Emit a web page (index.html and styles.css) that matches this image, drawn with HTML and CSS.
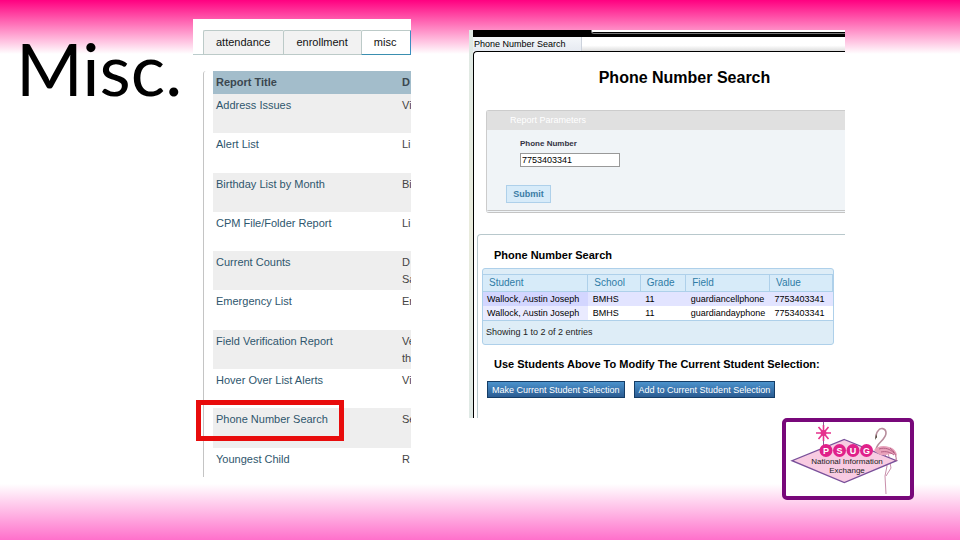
FILE: index.html
```html
<!DOCTYPE html>
<html lang="en">
<head>
    <meta charset="UTF-8">
    <meta name="viewport" content="width=device-width, initial-scale=1.0">
    <title>Misc.</title>
    <link rel="stylesheet" href="styles.css">
</head>
<body>

    <main class="slide">
        <h1 class="slide-title">Misc.</h1>

        <section class="reports">
            <nav class="tabs">
                <a class="tab" href="#attendance">attendance</a>
                <a class="tab" href="#enrollment">enrollment</a>
                <a class="tab active" href="#misc">misc</a>
            </nav>

            <div class="report-list">
                <table class="report-table">
                    <thead>
                        <tr><th class="name">Report Title</th><th>D</th></tr>
                    </thead>
                    <tbody>
                        <tr><td><a href="#">Address Issues</a></td><td>Vi</td></tr>
                        <tr><td><a href="#">Alert List</a></td><td>Li</td></tr>
                        <tr><td><a href="#">Birthday List by Month</a></td><td>Bi</td></tr>
                        <tr><td><a href="#">CPM File/Folder Report</a></td><td>Li</td></tr>
                        <tr><td><a href="#">Current Counts</a></td><td>D<br>Sa</td></tr>
                        <tr><td><a href="#">Emergency List</a></td><td>Er</td></tr>
                        <tr><td><a href="#">Field Verification Report</a></td><td>Ve<br>th</td></tr>
                        <tr><td><a href="#">Hover Over List Alerts</a></td><td>Vi</td></tr>
                        <tr><td class="marked"><a href="#">Phone Number Search</a></td><td>Se</td></tr>
                        <tr><td><a href="#">Youngest Child</a></td><td>R</td></tr>
                    </tbody>
                </table>
            </div>
        </section>

        <section class="search">
            <div class="window-bar"><div class="window-bar-inset"></div></div>
            <div class="window-tabs"><span class="window-tab">Phone Number Search</span></div>

            <div class="search-page">
                <h2 class="search-title">Phone Number Search</h2>

                <form class="params">
                    <div class="params-head">Report Parameters</div>
                    <div class="params-body">
                        <label for="phone">Phone Number</label>
                        <input type="text" id="phone" value="7753403341">
                        <button type="button" class="submit">Submit</button>
                    </div>
                </form>

                <div class="results">
                    <h3>Phone Number Search</h3>
                    <div class="grid">
                        <table class="grid-table">
                            <thead>
                                <tr>
                                    <th class="student">Student</th>
                                    <th class="school">School</th>
                                    <th class="grade">Grade</th>
                                    <th class="field">Field</th>
                                    <th>Value</th>
                                </tr>
                            </thead>
                            <tbody>
                                <tr><td>Wallock, Austin Joseph</td><td>BMHS</td><td>11</td><td>guardiancellphone</td><td>7753403341</td></tr>
                                <tr><td>Wallock, Austin Joseph</td><td>BMHS</td><td>11</td><td>guardiandayphone</td><td>7753403341</td></tr>
                            </tbody>
                        </table>
                        <div class="grid-foot">Showing 1 to 2 of 2 entries</div>
                    </div>
                    <h3>Use Students Above To Modify The Current Student Selection:</h3>
                    <div class="actions">
                        <button type="button">Make Current Student Selection</button>
                        <button type="button">Add to Current Student Selection</button>
                    </div>
                </div>
            </div>
        </section>

        <div class="logo">
            <svg viewBox="0 0 124 74" role="img" aria-label="PSUG National Information Exchange">
                <g transform="translate(-4 -4)">
                    <path d="M41.5 4V33" stroke="#8a5d96" stroke-width="1"/>
                    <path d="M34 15h15M36.500 9l10 12M46.500 9l-10 12M41.500 7v16" stroke="#e5338d" stroke-width="1.600"/>
                    <circle cx="41.500" cy="15" r="3" fill="#e5338d"/>
                    <!-- flamingo legs and tail -->
                    <path d="M103 34L105 48 103 58 104 76M106 34L109 50 104 58" fill="none" stroke="#c98fab" stroke-width="1"/>
                    <path d="M62.300 21.500L114.500 42.700 62.300 64.500 10 42.700Z" fill="#f8cbe2" stroke="#79509a" stroke-width="1.300"/>
                    <path d="M94 20c0-3 0-5 2-7 2-4 8-3 8 2 0 7-10 10-10 17" fill="none" stroke="#b78d9c" stroke-width="1.600"/>
                    <path d="M94 16l-1 6 2-3z" fill="#443"/>
                    <path d="M92 32c3-4 10-5 15-3 5 1 8 5 8 9-4-3-7-2-11-1-5 1-9-1-12-5z" fill="#e9a2bb"/>
                    <path d="M97 31c6-2 11 0 15 4M99 34c5-1 9 0 13 3M108 30c4 3 7 8 6 13" fill="none" stroke="#b35f84" stroke-width="1"/>
                    <g fill="#e0218a">
                        <circle cx="44" cy="32.500" r="6.500"/>
                        <circle cx="57.500" cy="32.500" r="6.500"/>
                        <circle cx="71" cy="32.500" r="6.500"/>
                        <circle cx="84.500" cy="32.500" r="6.500"/>
                    </g>
                    <g class="logo-letters">
                        <text x="44" y="36">P</text>
                        <text x="57.500" y="36">S</text>
                        <text x="71" y="36">U</text>
                        <text x="84.500" y="36">G</text>
                    </g>
                    <g class="logo-name">
                        <text x="65" y="46">National Information</text>
                        <text x="65" y="55">Exchange</text>
                    </g>
                </g>
            </svg>
        </div>
    </main>

</body>
</html>
```
FILE: styles.css
```css
*,
*::after {
    box-sizing: border-box;
}

body {
    margin: 0;
    font-family: "Liberation Sans", Arial, sans-serif;
    background: #fff;
}

.slide {
    display: grid;
    grid-template-columns: 193fr 218fr 58fr 376fr 115fr;
    grid-template-rows: auto 1fr;
    min-height: 100vh;
    background:
        linear-gradient(#ff0080, #fff) top / 100% 54px no-repeat,
        linear-gradient(#fff, #ff70cb) bottom / 100% 56px no-repeat;
}

.slide-title {
    margin: 25px 0 0 16px;
    font: 400 72px/86px Lato, Carlito, sans-serif;
}

/* left: list of reports */
.reports {
    grid-column: 2;
    grid-row: 1 / 3;
    align-self: start;
    margin-top: 19px;
    padding-top: 11px;
    background: #fff;
    overflow: hidden;
    font-size: 11px;
}

.tabs {
    display: flex;
    padding-left: 10px;
    background: linear-gradient(#bcc, #bcc) left bottom / 10px 1px no-repeat;
}

.tab {
    padding: 0 13px 0 12px;
    border: 1px solid #bccac8;
    border-right: 0;
    border-radius: 2px 0 0 0;
    background: #f2f2f2;
    color: #111;
    line-height: 23px;
    text-decoration: none;
}

.tab.active {
    flex: 1;
    background: #fff;
    border-right: 1px solid #3a8fc0;
    border-bottom-color: #3a8fb0;
}

.report-list {
    margin: 16px 0 0 10px;
    padding-left: 9px;
    border-left: 1px solid #c4c4c4;
    border-radius: 3px 0 0 0;
    height: 406px;
}

.report-table {
    width: 100%;
    height: 416px;
    table-layout: fixed;
    border-collapse: collapse;
    color: #444;
}

.report-table th,
.report-table td {
    height: 39px;
    padding: 3px 0 0 3px;
    line-height: 17px;
    text-align: left;
    vertical-align: top;
    white-space: nowrap;
}

.report-table th {
    height: 23px;
    background: #a3bdcb;
    color: #3b474f;
}

.report-table .name {
    width: 186px;
}

.report-table tbody tr:nth-child(odd) {
    background: #eee;
}

.report-table a {
    color: #2e566d;
    text-decoration: none;
}

.marked {
    position: relative;
}

.marked::after {
    content: "";
    position: absolute;
    left: -17px;
    top: -8px;
    width: 148px;
    height: 41px;
    border: 5px solid #e80c0c;
}

/* right: phone number search window */
.search {
    grid-column: 4;
    grid-row: 1;
    margin-top: 30px;
    padding-left: 4px;
    background: linear-gradient(#dfe9e5, #e9ebdc 50%, #dfe9e5) left / 4px 100% no-repeat #fff;
    overflow: hidden;
    font-size: 9px;
}

.window-bar {
    height: 7px;
    background: #000;
}

.window-bar-inset {
    height: 4px;
    margin-left: 118px;
    border: 1px solid #777;
    border-width: 0 0 1px 1px;
    border-radius: 0 0 0 3px;
    background: linear-gradient(#fff 2px, #000 2px);
}

.window-tabs {
    display: flex;
    background: linear-gradient(#fff 60%, #ddd);
}

.window-tab {
    width: 109px;
    padding-left: 1px;
    border-right: 1px solid #ccd2dc;
    background: linear-gradient(#f4f7fa, #e6eaf1);
    line-height: 14px;
}

.search-page {
    border: 1px solid #000;
    border-width: 1px 0 0 1px;
    border-radius: 4px 0 0 0;
    background: #fff;
}

.search-title {
    margin: 16px 0 23px;
    padding-left: 50px;
    font-size: 16px;
    line-height: 19px;
    text-align: center;
}

.params {
    margin-left: 12px;
    border: 1px solid #ccc;
    border-right: 0;
    border-bottom: 3px double #c4c4c4;
    border-radius: 3px 0 0 3px;
    background: #f0f4f7;
}

.params-head {
    padding-left: 23px;
    background: #e0e0e0;
    color: #fff;
    line-height: 19px;
}

.params-body {
    display: flex;
    flex-direction: column;
    align-items: flex-start;
    padding: 8px 0 7px 19px;
}

.params-body label {
    padding-left: 14px;
    font-size: 8px;
    font-weight: bold;
    line-height: 12px;
    color: #334;
}

.params-body input {
    width: 100px;
    height: 14px;
    margin: 3px 0 18px 14px;
    padding: 0 1px;
    border: 1px solid #999;
    font: 9px "Liberation Sans", Arial, sans-serif;
}

.submit {
    width: 45px;
    height: 18px;
    padding: 0;
    border: 1px solid #aed0ea;
    background: #d7ebf9;
    color: #3a7ca5;
    font: bold 9px "Liberation Sans", Arial, sans-serif;
}

.results {
    margin: 21px 0 0 3px;
    padding: 13px 0 20px 4px;
    border: 1px solid #b8c8cc;
    border-width: 1px 0 0 1px;
    border-radius: 4px 0 0 0;
}

.results h3 {
    margin: 0 0 6px 12px;
    font-size: 11px;
    line-height: 14px;
    white-space: nowrap;
}

.grid {
    margin: 0 11px 12px 0;
    padding-top: 5px;
    border: 1px solid #aed0ea;
    border-radius: 3px;
    background: #deedf7;
}

.grid-table {
    width: 100%;
    table-layout: fixed;
    border-collapse: collapse;
    line-height: 14px;
}

.grid-table th {
    padding: 1px 0 1px 6px;
    border: 1px solid #aed0ea;
    border-width: 1px 1px 1px 0;
    background: #d7ebf9;
    color: #2f7ca6;
    font-size: 10px;
    font-weight: normal;
    text-align: left;
}

.grid-table td {
    padding: 0 0 0 5px;
    white-space: nowrap;
    background: #fff;
}

.grid-table tbody td:first-child {
    padding-left: 4px;
    background: #eaebff;
}

.grid-table tbody tr:first-child td {
    background: #e2e4ff;
}

.grid-table tbody tr:first-child td:first-child {
    background: #d3d6ff;
}

.student {
    width: 30%;
}

.school {
    width: 15%;
}

.grade {
    width: 13%;
}

.field {
    width: 24%;
}

.grid-foot {
    padding-left: 3px;
    border-top: 1px solid #aed0ea;
    line-height: 23px;
    color: #222;
}

.actions {
    display: flex;
    gap: 9px;
    padding: 4px 0 0 5px;
}

.actions button {
    height: 17px;
    padding: 0 4px;
    border: 1px solid #153d66;
    background: linear-gradient(#4b92cc, #2b5c92);
    color: #fff;
    font: 9px "Liberation Sans", Arial, sans-serif;
    white-space: nowrap;
}

.logo {
    grid-column: 4 / 6;
    grid-row: 2;
    justify-self: end;
    align-self: start;
    width: 132px;
    margin-right: 46px;
    border: 4px solid #78087a;
    border-radius: 5px;
    background: #fff;
}

.logo svg {
    display: block;
}

.logo-letters {
    fill: #fff;
    font: bold 9px "Liberation Sans", Arial, sans-serif;
    text-anchor: middle;
}

.logo-name {
    fill: #222;
    font: 8px "Liberation Sans", Arial, sans-serif;
    text-anchor: middle;
}
```
